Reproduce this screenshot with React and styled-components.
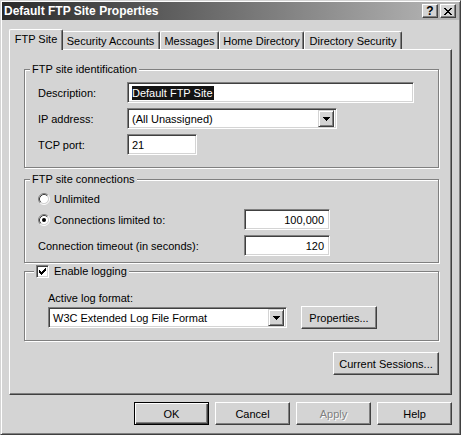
import React from 'react';
import styled, { createGlobalStyle, css } from 'styled-components';

const FACE = '#d4d4d4';
const LIGHT = '#ffffff';
const SHADOW = '#808080';
const DARK = '#404040';

const GlobalStyle = createGlobalStyle`
  html, body { margin: 0; padding: 0; background: ${FACE}; }
  body {
    font-family: "Liberation Sans", Arial, sans-serif;
    font-size: 11px;
    color: #000;
  }
  * { box-sizing: border-box; }
`;

const Window = styled.div`
  width: 461px;
  height: 435px;
  background: ${FACE};
  border: 1px solid;
  border-color: ${FACE} ${DARK} ${DARK} ${FACE};
  box-shadow: inset 1px 1px ${LIGHT}, inset -1px -1px ${SHADOW};
  padding: 1px;
  display: flex;
  flex-direction: column;
`;

const TitleBar = styled.div`
  height: 18px;
  display: flex;
  align-items: center;
  padding: 0 3px 0 2px;
  background: linear-gradient(to right, #2a2a2a, #b8b8b8);
`;

const TitleText = styled.div`
  flex: 1;
  color: #fff;
  font-weight: bold;
  font-size: 12px;
  white-space: nowrap;
`;

const CaptionButtons = styled.div`
  display: flex;
  gap: 2px;
`;

const raised = css`
  background: ${FACE};
  border: 1px solid;
  border-color: ${LIGHT} ${DARK} ${DARK} ${LIGHT};
  box-shadow: inset -1px -1px ${SHADOW};
`;

const CaptionButton = styled.div`
  ${raised}
  width: 16px;
  height: 14px;
  display: flex;
  align-items: center;
  justify-content: center;
  font-weight: bold;
  font-size: 12px;
  line-height: 12px;
`;

const TabRow = styled.div`
  margin-top: 9px;
  height: 20px;
  display: flex;
  align-items: flex-end;
  padding-left: 9px;
`;

const Tab = styled.div`
  width: ${(p) => p.$w}px;
  height: 18px;
  background: ${FACE};
  border-top: 1px solid ${LIGHT};
  border-left: 1px solid ${LIGHT};
  border-right: 1px solid ${DARK};
  box-shadow: inset -1px 0 ${SHADOW};
  border-radius: 2px 2px 0 0;
  display: flex;
  align-items: center;
  justify-content: center;
  white-space: nowrap;
  padding-top: 1px;
  ${(p) =>
    p.$active &&
    css`
      position: relative;
      z-index: 1;
      width: ${p.$w + 4}px;
      height: 21px;
      margin: 0 -2px -1px -2px;
      padding-top: 0;
      padding-bottom: 3px;
    `}
`;

const Panel = styled.div`
  margin: 0 7px;
  height: 346px;
  border: 1px solid;
  border-color: ${LIGHT} ${DARK} ${DARK} ${LIGHT};
  box-shadow: inset -1px -1px ${SHADOW};
  padding: 19px 12px 0 14px;
  display: flex;
  flex-direction: column;
`;

const GroupBox = styled.div`
  margin-top: ${(p) => p.$top || 0}px;
  border: 1px solid ${SHADOW};
  box-shadow: inset 1px 1px ${LIGHT}, 1px 1px ${LIGHT};
  display: flex;
  flex-direction: column;
`;

const GroupTitle = styled.div`
  align-self: flex-start;
  margin: -8px 0 0 ${(p) => p.$indent}px;
  padding: 0 2px;
  height: 14px;
  line-height: 14px;
  background: ${FACE};
  display: flex;
  align-items: center;
  gap: 5px;
  white-space: nowrap;
`;

const GroupBody = styled.div`
  display: flex;
  flex-direction: column;
  padding: ${(p) => p.$pad};
  gap: ${(p) => p.$gap || 0}px;
`;

const Row = styled.div`
  display: flex;
  align-items: center;
  height: ${(p) => p.$h || 21}px;
  margin-top: ${(p) => p.$top || 0}px;
  gap: ${(p) => p.$gap || 0}px;
`;

const Label = styled.div`
  width: ${(p) => p.$w}px;
  white-space: nowrap;
  display: flex;
  align-items: center;
  gap: 4px;
`;

const sunken = css`
  background: #fff;
  border: 1px solid;
  border-color: ${SHADOW} ${LIGHT} ${LIGHT} ${SHADOW};
  box-shadow: inset 1px 1px ${DARK}, inset -1px -1px ${FACE};
`;

const TextBox = styled.div`
  ${sunken}
  width: ${(p) => p.$w}px;
  height: 21px;
  display: flex;
  align-items: center;
  justify-content: ${(p) => (p.$right ? 'flex-end' : 'flex-start')};
  padding: ${(p) => (p.$right ? '0 5px 0 0' : '0 0 0 4px')};
  white-space: nowrap;
`;

const Selected = styled.span`
  background: #141414;
  color: #fff;
  line-height: 14px;
  padding: 0 1px 0 0;
`;

const Combo = styled.div`
  ${sunken}
  width: ${(p) => p.$w}px;
  height: 21px;
  display: flex;
  align-items: center;
  padding: 2px 2px 2px 4px;
  white-space: nowrap;
`;

const ComboText = styled.div`
  flex: 1;
`;

const DropButton = styled.div`
  width: 16px;
  height: 17px;
  background: ${FACE};
  border: 1px solid;
  border-color: ${FACE} ${DARK} ${DARK} ${FACE};
  box-shadow: inset 1px 1px ${LIGHT}, inset -1px -1px ${SHADOW};
  display: flex;
  align-items: center;
  justify-content: center;
`;

const Button = styled.div`
  ${raised}
  width: ${(p) => p.$w || 75}px;
  height: 23px;
  display: flex;
  align-items: center;
  justify-content: center;
  white-space: nowrap;
  align-self: ${(p) => p.$align || 'auto'};
  margin-top: ${(p) => p.$top || 0}px;
  ${(p) =>
    p.$default &&
    css`
      border-color: #000;
      box-shadow: inset 1px 1px ${LIGHT}, inset -1px -1px ${DARK}, inset -2px -2px ${SHADOW};
    `}
  ${(p) =>
    p.$disabled &&
    css`
      color: ${SHADOW};
      text-shadow: 1px 1px ${LIGHT};
    `}
`;

const CheckBoxBox = styled.span`
  width: 13px;
  height: 13px;
  background: #fff;
  border: 1px solid;
  border-color: ${SHADOW} ${LIGHT} ${LIGHT} ${SHADOW};
  box-shadow: inset 1px 1px ${DARK}, inset -1px -1px ${FACE};
  display: flex;
  align-items: center;
  justify-content: center;
  flex-shrink: 0;
`;

const Footer = styled.div`
  margin-top: 7px;
  display: flex;
  justify-content: flex-end;
  gap: 6px;
  padding-right: 7px;
`;

const Svg = styled.svg`
  display: block;
  flex-shrink: 0;
  shape-rendering: crispEdges;
`;

const Arrow = () => (
  <Svg width="7" height="4" viewBox="0 0 7 4">
    <path d="M0 0h7v1h-7zM1 1h5v1h-5zM2 2h3v1h-3zM3 3h1v1h-1z" fill="#000" />
  </Svg>
);

const CheckMark = () => (
  <Svg width="7" height="7" viewBox="0 0 7 7">
    <path
      d="M0 2h1v3h-1zM1 3h1v3h-1zM2 4h1v3h-1zM3 3h1v3h-1zM4 2h1v3h-1zM5 1h1v3h-1zM6 0h1v3h-1z"
      fill="#000"
    />
  </Svg>
);

const CloseGlyph = () => (
  <Svg width="8" height="7" viewBox="0 0 8 7">
    <path
      d="M0 0h2v1h-2zM6 0h2v1h-2zM1 1h2v1h-2zM5 1h2v1h-2zM2 2h4v1h-4zM3 3h2v1h-2zM2 4h4v1h-4zM1 5h2v1h-2zM5 5h2v1h-2zM0 6h2v1h-2zM6 6h2v1h-2z"
      fill="#000"
    />
  </Svg>
);

const RadioSvg = styled.svg`
  display: block;
  flex-shrink: 0;
`;

const Radio = ({ checked }) => (
  <RadioSvg width="12" height="12" viewBox="0 0 12 12">
    <circle cx="6" cy="6" r="4.2" fill="#fff" />
    <path d="M2.11 9.89 A5.5 5.5 0 0 1 9.89 2.11" fill="none" stroke={SHADOW} />
    <path d="M9.89 2.11 A5.5 5.5 0 0 1 2.11 9.89" fill="none" stroke={LIGHT} />
    <path d="M2.82 9.18 A4.5 4.5 0 0 1 9.18 2.82" fill="none" stroke={DARK} />
    <path d="M9.18 2.82 A4.5 4.5 0 0 1 2.82 9.18" fill="none" stroke={FACE} />
    {checked && <circle cx="6" cy="6" r="2" fill="#000" />}
  </RadioSvg>
);

const tabs = [
  { label: 'FTP Site', w: 50, active: true },
  { label: 'Security Accounts', w: 99 },
  { label: 'Messages', w: 59 },
  { label: 'Home Directory', w: 85 },
  { label: 'Directory Security', w: 98 },
];

export default function App() {
  return (
    <>
      <GlobalStyle />
      <Window>
        <TitleBar>
          <TitleText>Default FTP Site Properties</TitleText>
          <CaptionButtons>
            <CaptionButton>?</CaptionButton>
            <CaptionButton>
              <CloseGlyph />
            </CaptionButton>
          </CaptionButtons>
        </TitleBar>

        <TabRow>
          {tabs.map((t) => (
            <Tab key={t.label} $w={t.w} $active={t.active}>
              {t.label}
            </Tab>
          ))}
        </TabRow>

        <Panel>
          <GroupBox>
            <GroupTitle $indent={5}>FTP site identification</GroupTitle>
            <GroupBody $pad="6px 0 12px 13px" $gap={5}>
              <Row>
                <Label $w={89}>Description:</Label>
                <TextBox $w={287}>
                  <Selected>Default FTP Site</Selected>
                </TextBox>
              </Row>
              <Row>
                <Label $w={89}>IP address:</Label>
                <Combo $w={210}>
                  <ComboText>(All Unassigned)</ComboText>
                  <DropButton>
                    <Arrow />
                  </DropButton>
                </Combo>
              </Row>
              <Row>
                <Label $w={89}>TCP port:</Label>
                <TextBox $w={70}>21</TextBox>
              </Row>
            </GroupBody>
          </GroupBox>

          <GroupBox $top={11}>
            <GroupTitle $indent={5}>FTP site connections</GroupTitle>
            <GroupBody $pad="6px 0 6px 13px">
              <Row $h={14}>
                <Label $w={206}>
                  <Radio />
                  Unlimited
                </Label>
              </Row>
              <Row $top={3}>
                <Label $w={206}>
                  <Radio checked />
                  Connections limited to:
                </Label>
                <TextBox $w={86} $right>
                  100,000
                </TextBox>
              </Row>
              <Row $top={5}>
                <Label $w={206}>Connection timeout (in seconds):</Label>
                <TextBox $w={86} $right>
                  120
                </TextBox>
              </Row>
            </GroupBody>
          </GroupBox>

          <GroupBox $top={8}>
            <GroupTitle $indent={9}>
              <CheckBoxBox>
                <CheckMark />
              </CheckBoxBox>
              Enable logging
            </GroupTitle>
            <GroupBody $pad="13px 0 11px 23px">
              <Row $h={14}>Active log format:</Row>
              <Row $h={23} $top={1} $gap={14}>
                <Combo $w={239}>
                  <ComboText>W3C Extended Log File Format</ComboText>
                  <DropButton>
                    <Arrow />
                  </DropButton>
                </Combo>
                <Button $w={76}>Properties...</Button>
              </Row>
            </GroupBody>
          </GroupBox>

          <Button $w={106} $align="flex-end" $top={11}>
            Current Sessions...
          </Button>
        </Panel>

        <Footer>
          <Button $default>OK</Button>
          <Button>Cancel</Button>
          <Button $disabled>Apply</Button>
          <Button>Help</Button>
        </Footer>
      </Window>
    </>
  );
}
